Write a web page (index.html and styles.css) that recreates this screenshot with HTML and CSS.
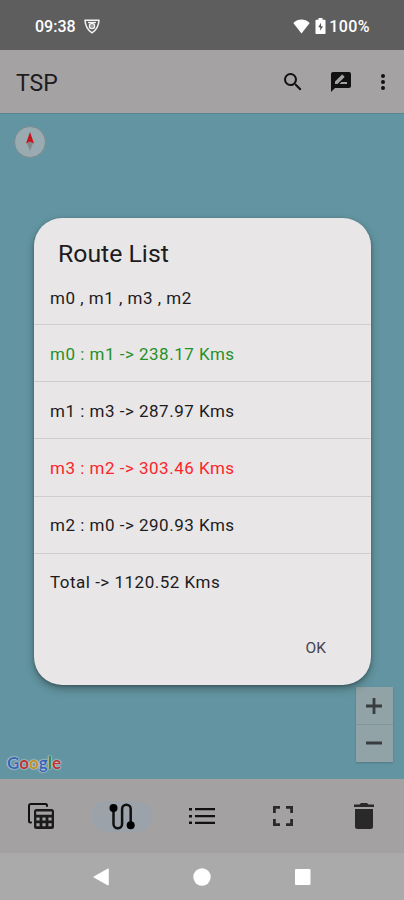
FILE: index.html
```html
<!DOCTYPE html>
<html lang="en">
<head>
  <meta charset="UTF-8">
  <title>TSP</title>
  <meta name="viewport" content="width=device-width, initial-scale=1.0">
  <link rel="stylesheet" href="styles.css">
</head>
<body>
  <div class="status-bar">
    <span class="clock">09:38</span>
    <svg class="shield" width="16" height="16" viewBox="0 0 16 16" fill="none" stroke="#f4f4f4">
      <path stroke-width="1.500" stroke-linejoin="round" d="M1 2.200h14c-.3 5.500-2.600 9.800-7 12.600C3.600 12 1.300 7.700 1 2.200z"/>
      <path stroke-width="1.300" d="M4 4.500h8"/>
      <circle cx="8" cy="8" r="2.500" stroke-width="1.500"/>
      <circle cx="8" cy="8" r=".8" fill="#fff" stroke="none"/>
    </svg>
    <svg class="wifi" width="17" height="15" viewBox="0 0 17 15"><path fill="#fff" d="M8.500 14.500.3 4C5-.6 12-.6 16.700 4z"/></svg>
    <svg class="battery" width="11" height="16" viewBox="0 0 11 16">
      <path fill="#fff" d="M3.500 0h4v1.800h2c.6 0 1 .4 1 1V15c0 .6-.4 1-1 1h-8c-.6 0-1-.4-1-1V2.800c0-.6.4-1 1-1h2z"/>
      <path fill="#555" d="M6 4.800 3.200 9.300h2v3.500L8 8.300H6z"/>
    </svg>
    <span class="percent">100%</span>
  </div>

  <div class="app-bar">
    <h1>TSP</h1>
    <svg class="search" width="24" height="24" viewBox="0 0 24 24"><path d="M15.500 14h-.79l-.28-.27A6.471 6.471 0 0 0 16 9.500 6.500 6.500 0 1 0 9.500 16c1.610 0 3.090-.59 4.230-1.570l.27.28v.79l5 4.990L20.490 19l-4.990-5zm-6 0C7.010 14 5 11.990 5 9.500S7.010 5 9.500 5 14 7.010 14 9.500 11.990 14 9.500 14z"/></svg>
    <svg class="review" width="24" height="24" viewBox="0 0 24 24"><path d="M20 2H4c-1.100 0-1.990.9-1.990 2L2 22l4-4h14c1.100 0 2-.9 2-2V4c0-1.100-.9-2-2-2zM6 14v-2.470l6.880-6.880c.2-.2.51-.2.71 0l1.770 1.770c.2.2.2.51 0 .71L8.470 14H6zm12 0h-7.500l2-2H18v2z"/></svg>
    <svg class="more" width="24" height="24" viewBox="0 0 24 24"><circle cx="12" cy="6" r="2"/><circle cx="12" cy="12" r="2"/><circle cx="12" cy="18" r="2"/></svg>
  </div>

  <div class="map">
    <div class="compass">
      <svg width="12" height="22" viewBox="0 0 12 22">
        <path fill="#85878a" d="M6 10 9 12 6 20 3 12z"/>
        <path fill="#c4141c" d="M6 1 10 12.500 6 10.500 2 12.500z"/>
      </svg>
    </div>
    <div class="zoom">
      <div><svg width="16" height="16" viewBox="0 0 16 16"><path d="M0 6.600h6.600V0h2.800v6.600H16v2.800H9.400V16H6.600V9.400H0z"/></svg></div>
      <div><svg width="16" height="16" viewBox="0 0 16 16"><path d="M0 6.500h16v3H0z"/></svg></div>
    </div>
    <div class="google"><span class="b">G</span><span class="r">o</span><span class="y">o</span><span class="b">g</span><span class="g">l</span><span class="r">e</span></div>
  </div>

  <div class="bottom-nav">
    <div class="item">
      <svg width="28" height="28" viewBox="0 0 28 28">
        <path fill="none" stroke="#111" stroke-width="2" stroke-linecap="round" d="M4 20.500H3.500a1.500 1.500 0 0 1-1.500-1.500V4A2 2 0 0 1 4 2h14.500a1.500 1.500 0 0 1 1.500 1.500V4"/>
        <path fill="#1b1b1b" fill-rule="evenodd" d="M9.500 7h15A2.500 2.500 0 0 1 27 9.500v15a2.500 2.500 0 0 1-2.500 2.500h-15A2.500 2.500 0 0 1 7 24.500v-15A2.500 2.500 0 0 1 9.500 7zM9.200 9.500v3.200h15.600V9.500zM9.400 15.500v2.900h3.200v-2.900zM15.400 15.500v2.900h3.200v-2.900zM21.400 15.500v2.900h3.200v-2.900zM9.400 21.200v3h3.200v-3zM15.400 21.200v3h3.200v-3zM21.400 21.200v3h3.200v-3z"/>
      </svg>
    </div>
    <div class="item active">
      <svg width="28" height="28" viewBox="0 0 28 28">
        <path fill="none" stroke="#111" stroke-width="2.500" d="M5.500 6v15.500a4.300 4.300 0 0 0 8.600 0V6.500a4.300 4.300 0 0 1 8.600 0V22"/>
        <circle cx="5.500" cy="5.500" r="4"/><circle cx="22.700" cy="22.700" r="4"/>
      </svg>
    </div>
    <div class="item">
      <svg width="26" height="18" viewBox="0 0 26 18"><path fill="#111" d="M0 1h3v2.500H0zM6 1h20v2.300H6zM0 8h3v2.500H0zM6 8h20v2.300H6zM0 14.500h3V17H0zM6 14.700h20V17H6z"/></svg>
    </div>
    <div class="item">
      <svg width="22" height="22" viewBox="0 0 22 22"><path fill="none" stroke="#2a2a2a" stroke-width="2.800" d="M2.400 8V2.400H8M14 2.400h5.600V8M19.600 14v5.600H14M8 19.600H2.400V14"/></svg>
    </div>
    <div class="item">
      <svg width="22" height="28" viewBox="0 0 22 28"><path fill="#292929" d="M2 7h18v17.500a2.500 2.500 0 0 1-2.500 2.500h-13A2.500 2.500 0 0 1 2 24.500zM1 2.500h5.500L8 1h6l1.500 1.500H21v2.500H1z"/></svg>
    </div>
  </div>

  <div class="system-nav">
    <svg width="16" height="18" viewBox="0 0 16 18"><path d="M14.500.7c.7-.4 1.300 0 1.300.7v15.200c0 .7-.6 1.100-1.300.7L.8 9.600c-.6-.3-.6-.9 0-1.200z"/></svg>
    <svg width="18" height="18" viewBox="0 0 18 18"><circle cx="9" cy="9" r="8.700"/></svg>
    <svg width="16" height="16" viewBox="0 0 16 16"><rect width="15.500" height="16" rx="1"/></svg>
  </div>

  <div class="dialog">
    <h2>Route List</h2>
    <ul>
      <li>m0 , m1 , m3 , m2</li>
      <li class="shortest">m0 : m1 -&gt; 238.17 Kms</li>
      <li>m1 : m3 -&gt; 287.97 Kms</li>
      <li class="longest">m3 : m2 -&gt; 303.46 Kms</li>
      <li>m2 : m0 -&gt; 290.93 Kms</li>
      <li>Total -&gt; 1120.52 Kms</li>
    </ul>
    <button>OK</button>
  </div>
</body>
</html>
```
FILE: styles.css
```css
* { box-sizing: border-box; }
body { margin: 0; height: 900px; display: flex; flex-direction: column; position: relative; overflow: hidden; font-family: Roboto, sans-serif; color: #1c1b1d; }
svg { display: block; flex: none; }
h1, h2, ul { margin: 0; padding: 0; font-weight: 400; }

.status-bar { height: 50px; padding: 2px 34px 0 35px; display: flex; align-items: center; background: #5e5e5e; color: #fff; font-size: 16px; font-weight: 500; }
.shield { margin-left: 8px; }
.wifi { margin-left: auto; }
.battery { margin: 0 3px 0 5px; }
.percent { letter-spacing: 0.4px; }

.app-bar { height: 63px; padding: 0 9px 0 16px; display: flex; align-items: center; background: #a4a2a3; }
.app-bar h1 { font-size: 23px; margin-top: 3px; }
.app-bar svg { fill: #111; }
.search { margin-left: auto; }
.app-bar .review { margin: 0 18px 0 24px; }

.map { height: 666px; position: relative; background: #6295a1; border-top: 1px solid #568791; }
.compass { position: absolute; left: 14px; top: 12px; width: 32px; height: 32px; display: flex; align-items: center; justify-content: center; border-radius: 50%; background: #99abb1; border: 1px solid #7d8a8e; }
.zoom { position: absolute; right: 11px; bottom: 17px; width: 37px; background: #91a3a7; box-shadow: 0 1px 2px rgba(0,0,0,0.2); }
.zoom div { height: 37px; padding-right: 1px; display: flex; align-items: center; justify-content: center; }
.zoom div + div { border-top: 1px solid #82979c; height: 38px; padding-bottom: 1px; }
.zoom svg { fill: #393d40; }
.google { position: absolute; left: 7px; bottom: 6px; font: 700 17px/20px Lato, sans-serif; text-shadow: 0 0 1px #d5dade, 0 0 1px #d5dade, 0 0 2px #d5dade; }
.b { color: #3764b5; }
.r { color: #b73535; }
.y { color: #bd9227; }
.g { color: #328550; }

.bottom-nav { height: 74px; padding-left: 1px; display: flex; align-items: center; background: #a3a1a2; }
.item { flex: 1; display: flex; align-items: center; justify-content: center; }
.active svg { box-sizing: content-box; padding: 1.5px 17px; border-radius: 16px; background: #9ca2a9; }

.system-nav { height: 47px; padding-top: 1px; display: flex; align-items: center; justify-content: center; gap: 84px; background: #aaa; }
.system-nav svg { fill: #fff; }

.dialog { position: absolute; left: 34px; top: 218px; width: 337px; height: 467px; display: flex; flex-direction: column; border-radius: 28px; background: #e8e6e7; box-shadow: 0 4px 8px rgba(0,0,0,0.3), 0 1px 3px rgba(0,0,0,0.25); }
.dialog h2 { padding: 20px 24px 0; font-size: 24.8px; line-height: 32px; }
.dialog ul { list-style: none; font-size: 17px; letter-spacing: 0.5px; }
.dialog li { height: 57.2px; padding: 1.5px 16px 0; display: flex; align-items: center; border-bottom: 1px solid #cfcdce; }
.dialog li:first-child { height: 55px; }
.dialog li:last-child { border: 0; padding-top: 0; }
.dialog .shortest { color: #259129; }
.dialog .longest { color: #fb252b; }
.dialog button { align-self: flex-end; margin: 19px 37px 0 0; padding: 8px; border: 0; background: none; color: #45454f; font: 400 15.5px/20px Roboto, sans-serif; }
```
